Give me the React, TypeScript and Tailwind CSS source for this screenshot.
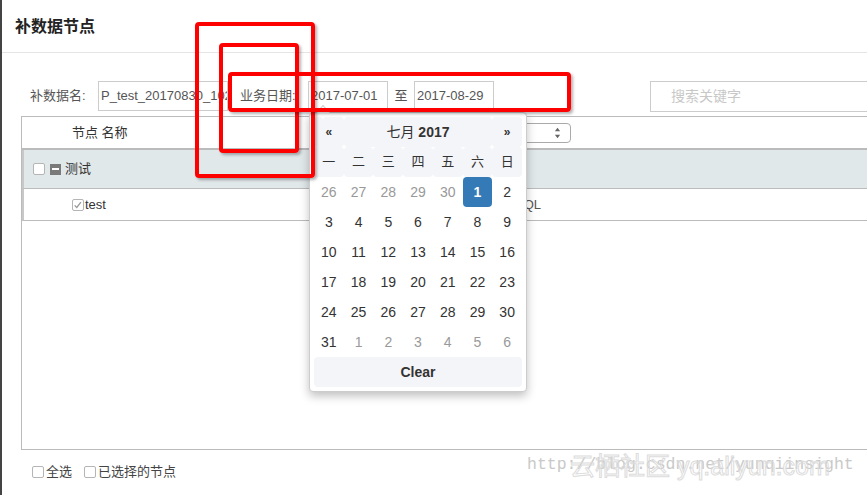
import React from "react";

const font = "font-['Liberation_Sans','Noto_Sans_CJK_SC',sans-serif]";

function Box({ checked }: { checked?: boolean }) {
  return (
    <span className="relative inline-block w-[12px] h-[12px] border border-[#b5b5b5] rounded-[2px] bg-white shrink-0 align-middle">
      {checked && (
        <svg viewBox="0 0 12 12" className="absolute left-0 top-0 w-[10px] h-[10px]">
          <path d="M2 6.5 L4.5 9 L9.5 2.5" fill="none" stroke="#999" strokeWidth="1.5" />
        </svg>
      )}
    </span>
  );
}

type Day = { n: number; muted?: boolean; active?: boolean };

function buildDays(): Day[] {
  const days: Day[] = [];
  [26, 27, 28, 29, 30].forEach((n) => days.push({ n, muted: true }));
  for (let i = 1; i <= 31; i++) days.push({ n: i, active: i === 1 });
  [1, 2, 3, 4, 5, 6].forEach((n) => days.push({ n, muted: true }));
  return days;
}

function DatePicker() {
  const dow = ["一", "二", "三", "四", "五", "六", "日"];
  const days = buildDays();
  return (
    <div className="absolute left-[307px] top-[112px] w-[218px] p-[4px] bg-white border border-[#ccc] rounded-[4px] shadow-[0_4px_10px_rgba(0,0,0,0.25)]">
      <div className="absolute left-[8px] -top-[6px] w-[10px] h-[10px] rotate-45 bg-white border-l border-t border-[#ccc]" />
      <div className="grid grid-cols-7">
        <div className="h-[30px] flex items-center justify-center bg-[#f4f5f8] rounded-[4px] text-[12px] font-bold text-[#333]">«</div>
        <div className="col-span-5 h-[30px] flex items-center justify-center bg-[#f4f5f8] rounded-[4px] text-[14px] text-[#333]">
          七月&nbsp;<span className="font-bold">2017</span>
        </div>
        <div className="h-[30px] flex items-center justify-center bg-[#f4f5f8] rounded-[4px] text-[12px] font-bold text-[#333]">»</div>
        {dow.map((d) => (
          <div key={d} className="h-[30px] flex items-center justify-center bg-[#f4f5f8] rounded-[4px] text-[13px] text-[#333]">
            {d}
          </div>
        ))}
        {days.map((d, i) => (
          <div
            key={i}
            className={
              d.active
                ? "h-[30px] flex items-center justify-center rounded-[4px] bg-[#337ab7] text-white font-bold text-[14px]"
                : d.muted
                ? "h-[30px] flex items-center justify-center text-[14px] text-[#999]"
                : "h-[30px] flex items-center justify-center text-[14px] text-[#333]"
            }
          >
            {d.n}
          </div>
        ))}
      </div>
      <div className="h-[30px] flex items-center justify-center bg-[#f4f5f8] rounded-[4px] text-[14px] font-bold text-[#333]">
        Clear
      </div>
    </div>
  );
}

export default function App() {
  return (
    <div className={`relative w-[867px] h-[495px] overflow-hidden bg-white border-l-2 border-[#444] ${font}`}>
      <div className="h-[53px] border-b border-[#e5e5e5] flex items-center pl-[13px] pt-[2px]">
        <span className="text-[16px] font-bold text-[#222]">补数据节点</span>
      </div>

      <div className="flex items-center h-[30px] mt-[28px] text-[13px] text-[#555] whitespace-nowrap">
        <span className="ml-[28px] w-[68px] shrink-0">补数据名:</span>
        <div className="w-[130px] h-[30px] shrink-0 border border-[#ccc] flex items-center pl-[2px] overflow-hidden">
          P_test_20170830_1021
        </div>
        <span className="ml-[12px] w-[68px] shrink-0">业务日期:</span>
        <div className="w-[80px] h-[30px] shrink-0 border border-[#ccc] flex items-center pl-[2px]">2017-07-01</div>
        <span className="w-[26px] shrink-0 text-center">至</span>
        <div className="w-[80px] h-[30px] shrink-0 border border-[#ccc] flex items-center pl-[2px]">2017-08-29</div>
        <div className="ml-[156px] w-[230px] h-[31px] shrink-0 border border-[#ccc] flex items-center pl-[20px] text-[14px] text-[#c8c8c8]">
          搜索关键字
        </div>
      </div>

      <div className="ml-[19px] mt-[5px] h-[334px] border-l border-t border-b border-[#bbb] text-[13px] text-[#333]">
        <div className="h-[33px] flex items-center border-b-2 border-[#bbb]">
          <span className="pl-[50px] w-[439px]">节点 名称</span>
          <div className="relative w-[110px] h-[20px] border border-[#aaa] rounded-[4px] bg-white">
            <svg viewBox="0 0 8 14" className="absolute right-[9px] top-[2px] w-[7px] h-[14px]">
              <path d="M4 1 L7 5 L1 5 Z" fill="#666" />
              <path d="M4 13 L7 9 L1 9 Z" fill="#666" />
            </svg>
          </div>
        </div>
        <div className="h-[39px] flex items-center bg-[#e1e8ea] border-b border-[#bbb] border-l-2 border-l-[#c8c8c8]">
          <span className="ml-[9px] flex"><Box /></span>
          <span className="ml-[5px] w-[11px] h-[11px] bg-[#7a7a7a] flex items-center justify-center">
            <span className="w-[7px] h-[2px] bg-white" />
          </span>
          <span className="ml-[4px]">测试</span>
        </div>
        <div className="h-[32px] flex items-center border-b border-[#bbb] border-l-2 border-l-[#c8c8c8]">
          <span className="ml-[48px] flex"><Box checked /></span>
          <span className="ml-[1px] w-[430px]">test</span>
          <span className="text-[#555]">SQL</span>
        </div>
      </div>

      <div className="flex items-center mt-[12px] text-[13px] text-[#444]">
        <span className="ml-[30px] flex"><Box /></span>
        <span className="ml-[2px]">全选</span>
        <span className="ml-[12px] flex"><Box /></span>
        <span className="ml-[2px]">已选择的节点</span>
      </div>

      <div className="absolute left-[525px] top-[453px] font-['Liberation_Mono',monospace] text-[16.5px] text-[#c9c9c9] whitespace-nowrap">
        http://blog.csdn.net/yunqiinsight
      </div>
      <div className="absolute left-[568px] top-[448px] text-[25px] text-transparent whitespace-nowrap [-webkit-text-stroke:1px_#dcdcdc]">
        云栖社区 yq.aliyun.com
      </div>

      <DatePicker />

      <div className="absolute left-[193px] top-[22px] w-[120px] h-[156px] border-4 border-[#f00] rounded-[4px] shadow-[2px_2px_3px_rgba(0,0,0,0.3)]" />
      <div className="absolute left-[217px] top-[43px] w-[80px] h-[110px] border-4 border-[#f00] rounded-[4px] shadow-[2px_2px_3px_rgba(0,0,0,0.3)]" />
      <div className="absolute left-[226px] top-[72px] w-[343px] h-[40px] border-4 border-[#f00] rounded-[4px] shadow-[2px_2px_3px_rgba(0,0,0,0.3)]" />
    </div>
  );
}
